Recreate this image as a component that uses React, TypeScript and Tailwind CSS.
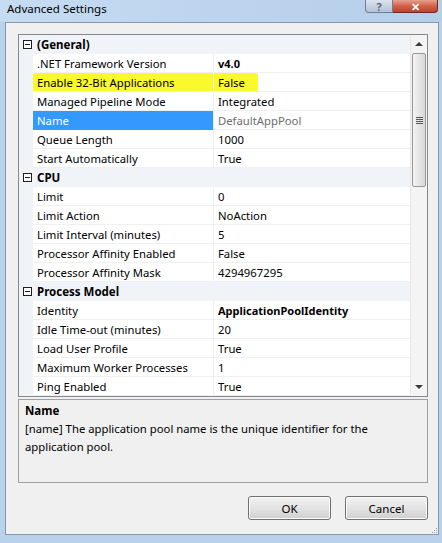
import React from "react";

type Row =
    | { kind: "cat"; label: string }
    | { kind: "prop"; label: string; value: string; bold?: boolean; selected?: boolean; marked?: boolean };

const rows: Row[] = [
    { kind: "cat", label: "(General)" },
    { kind: "prop", label: ".NET Framework Version", value: "v4.0", bold: true },
    { kind: "prop", label: "Enable 32-Bit Applications", value: "False", marked: true },
    { kind: "prop", label: "Managed Pipeline Mode", value: "Integrated" },
    { kind: "prop", label: "Name", value: "DefaultAppPool", selected: true },
    { kind: "prop", label: "Queue Length", value: "1000" },
    { kind: "prop", label: "Start Automatically", value: "True" },
    { kind: "cat", label: "CPU" },
    { kind: "prop", label: "Limit", value: "0" },
    { kind: "prop", label: "Limit Action", value: "NoAction" },
    { kind: "prop", label: "Limit Interval (minutes)", value: "5" },
    { kind: "prop", label: "Processor Affinity Enabled", value: "False" },
    { kind: "prop", label: "Processor Affinity Mask", value: "4294967295" },
    { kind: "cat", label: "Process Model" },
    { kind: "prop", label: "Identity", value: "ApplicationPoolIdentity", bold: true },
    { kind: "prop", label: "Idle Time-out (minutes)", value: "20" },
    { kind: "prop", label: "Load User Profile", value: "True" },
    { kind: "prop", label: "Maximum Worker Processes", value: "1" },
    { kind: "prop", label: "Ping Enabled", value: "True" },
];

function CollapseBox() {
    return (
        <div className="w-[9px] h-[9px] border border-[#1e1e1e] bg-white flex items-center justify-center">
            <div className="w-[5px] h-px bg-[#1e1e1e]" />
        </div>
    );
}

function GridRow({ row }: { row: Row }) {
    if (row.kind === "cat") {
        return (
            <div className="h-[19px] flex items-center bg-[#f0f3f8]">
                <div className="w-[14px] flex items-center justify-end pr-[1px]">
                    <CollapseBox />
                </div>
                <span className="pl-[4px] font-bold text-[11.5px] leading-[21px]">{row.label}</span>
            </div>
        );
    }

    return (
        <div className="h-[19px] flex bg-[#f0f3f8]">
            <div className="w-[14px]" />
            <div
                className={`w-[181px] h-[19px] pl-[4px] leading-[20px] border-b border-r border-[#f0f0f0] truncate ${
                    row.selected ? "bg-[#3399ff] text-white border-b-[#3399ff]" : row.marked ? "bg-[#f9f92c]" : "bg-white"
                }`}
            >
                {row.label}
            </div>
            <div className="flex-1 h-[19px] bg-white border-b border-[#f0f0f0] leading-[20px] overflow-hidden">
                <span
                    className={`inline-block pl-[4px] ${row.bold ? "font-bold text-[11px]" : ""} ${
                        row.selected ? "text-[#6d6d6d]" : ""
                    } ${row.marked ? "bg-[#f9f92c] pr-[13px] rounded-r-[3px]" : ""}`}
                >
                    {row.value}
                </span>
            </div>
        </div>
    );
}

function Scrollbar() {
    return (
        <div className="w-[17px] flex flex-col bg-[#f4f4f4] border-l border-[#e8e8e8]">
            <div className="h-[18px] flex items-center justify-center">
                <div className="w-0 h-0 border-l-[4px] border-r-[4px] border-b-[4px] border-l-transparent border-r-transparent border-b-[#3c3c3c]" />
            </div>
            <div className="mx-[1px] h-[134px] rounded-[2px] border border-[#979797] bg-gradient-to-r from-[#f3f3f3] via-[#e6e6e6] to-[#d7d7d7] flex items-center justify-center">
                <div className="flex flex-col gap-[1px]">
                    <div className="w-[7px] h-px bg-[#555]" />
                    <div className="w-[7px] h-px bg-[#555]" />
                    <div className="w-[7px] h-px bg-[#555]" />
                    <div className="w-[7px] h-px bg-[#555]" />
                </div>
            </div>
            <div className="flex-1" />
            <div className="h-[18px] flex items-center justify-center">
                <div className="w-0 h-0 border-l-[4px] border-r-[4px] border-t-[4px] border-l-transparent border-r-transparent border-t-[#3c3c3c]" />
            </div>
        </div>
    );
}

function DialogButton({ label }: { label: string }) {
    return (
        <button className="w-[83px] h-[24px] rounded-[3px] border border-[#707070] bg-gradient-to-b from-[#f2f2f2] via-[#e4e4e4] to-[#cfcfcf] shadow-[inset_0_0_0_1px_#fcfcfc] text-black text-[11.5px] leading-[21px]">
            {label}
        </button>
    );
}

export default function App() {
    return (
        <div
            className="w-[442px] h-[543px] bg-[#b9d1ea] flex flex-col overflow-hidden text-[11.3px] text-black"
            style={{ fontFamily: '"Segoe UI", "Noto Sans", sans-serif' }}
        >
            {/* Title bar */}
            <div className="h-[22px] flex justify-between bg-gradient-to-r from-[#c6dcf2] via-[#bcd4ee] to-[#b6cfe9]">
                <span className="pl-[7px] pt-[1px] leading-[16px] text-[11.5px]">Advanced Settings</span>
                <div className="flex mr-[4px] h-[13px]">
                    <div className="w-[28px] h-[13px] rounded-bl-[4px] border border-t-0 border-[#6e7d92] bg-gradient-to-b from-[#dbe4ef] to-[#b3c2d5] flex items-center justify-center text-[11px] font-bold text-[#5a6a7f] leading-none">
                        ?
                    </div>
                    <div className="w-[45px] h-[13px] rounded-br-[4px] border border-l-0 border-t-0 border-[#6b2a20] bg-gradient-to-b from-[#e8a08f] via-[#d2604a] to-[#c3402a] flex items-center justify-center text-white text-[11px] font-bold leading-none">
                        ✕
                    </div>
                </div>
            </div>

            {/* Client area */}
            <div className="ml-[5px] mr-[3px] h-[513px] border border-[#8497b0] bg-[#f0f0f0] flex flex-col pl-[12px] pt-[11px] relative">
                {/* Property grid */}
                <div className="w-[410px] border border-[#828790] flex bg-white">
                    <div className="flex-1 flex flex-col">
                        {rows.map((row, i) => (
                            <GridRow key={i} row={row} />
                        ))}
                    </div>
                    <Scrollbar />
                </div>

                {/* Description */}
                <div className="w-[410px] h-[84px] mt-[2px] border border-[#a0a0a0] bg-[#f0f0f0] pl-[6px] pt-[2px] leading-[18px]">
                    <div className="font-bold text-[11.5px]">Name</div>
                    <div className="w-[372px]">[name] The application pool name is the unique identifier for the application pool.</div>
                </div>

                {/* Buttons */}
                <div className="w-[410px] flex justify-end gap-[14px] mt-[13px]">
                    <DialogButton label="OK" />
                    <DialogButton label="Cancel" />
                </div>

                {/* Resize grip */}
                <div className="absolute right-[1px] bottom-[1px] grid grid-cols-3 gap-[1px]">
                    <div className="w-px h-px" />
                    <div className="w-px h-px" />
                    <div className="w-px h-px bg-[#a0a0a0]" />
                    <div className="w-px h-px" />
                    <div className="w-px h-px bg-[#a0a0a0]" />
                    <div className="w-px h-px bg-[#a0a0a0]" />
                    <div className="w-px h-px bg-[#a0a0a0]" />
                    <div className="w-px h-px bg-[#a0a0a0]" />
                    <div className="w-px h-px bg-[#a0a0a0]" />
                </div>
            </div>
        </div>
    );
}
